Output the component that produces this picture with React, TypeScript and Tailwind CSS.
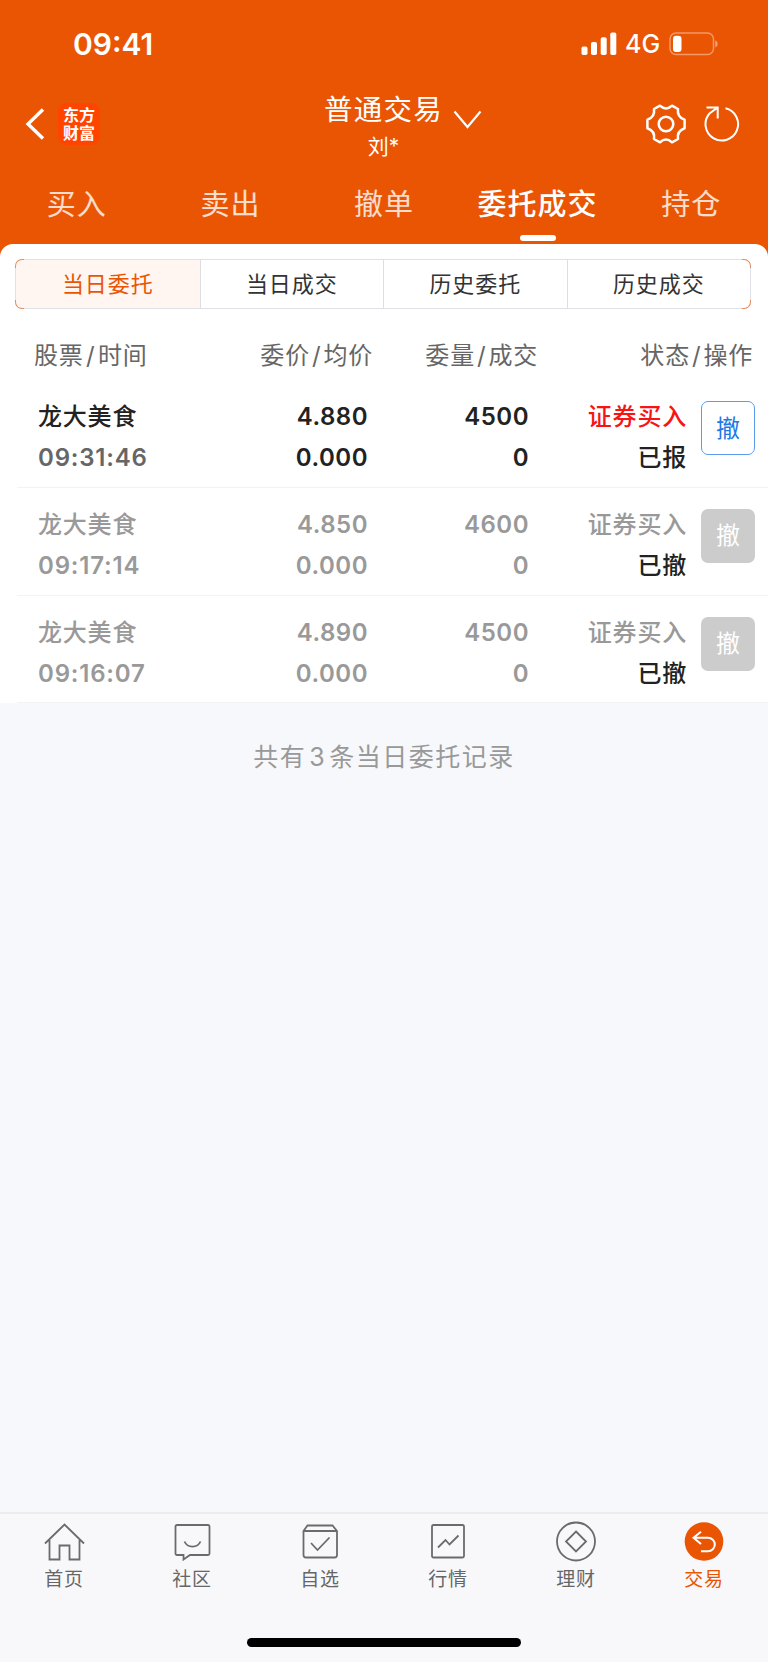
import React, { useState } from 'react';

type Order = {
  id: number;
  name: string;
  time: string;
  price: string;
  avgPrice: string;
  amount: string;
  dealt: string;
  side: string;
  status: string;
  active: boolean;
};

const orders: Order[] = [
  { id: 1, name: "龙大美食", time: "09:31:46", price: "4.880", avgPrice: "0.000", amount: "4500", dealt: "0", side: "证券买入", status: "已报", active: true },
  { id: 2, name: "龙大美食", time: "09:17:14", price: "4.850", avgPrice: "0.000", amount: "4600", dealt: "0", side: "证券买入", status: "已撤", active: false },
  { id: 3, name: "龙大美食", time: "09:16:07", price: "4.890", avgPrice: "0.000", amount: "4500", dealt: "0", side: "证券买入", status: "已撤", active: false },
];

const mainTabs = ["买入", "卖出", "撤单", "委托成交", "持仓"];
const subTabs = ["当日委托", "当日成交", "历史委托", "历史成交"];

function StatusBar() {
  return (
    <div className="h-[88px] flex items-center justify-between pl-[73px] pr-[49px] text-white">
      <p className="text-[30px] font-semibold">09:41</p>
      <div className="flex items-center">
        <svg width="36" height="24" viewBox="0 0 36 24" fill="currentColor">
          <rect x="0.5" y="14.5" width="6" height="8.5" rx="1.8" />
          <rect x="10" y="10" width="6" height="13" rx="1.8" />
          <rect x="19.7" y="5.2" width="6" height="17.8" rx="1.8" />
          <rect x="29.3" y="0.5" width="6" height="22.5" rx="1.8" />
        </svg>
        <p className="ml-[8px] w-[36px] mt-[2px] text-[25px] font-medium">4G</p>
        <svg className="ml-[8px]" width="50" height="24" viewBox="0 0 50 24" fill="none">
          <rect x="1" y="1" width="43.5" height="21.5" rx="6" stroke="white" strokeOpacity="0.4" strokeWidth="1.5" />
          <rect x="4" y="3.7" width="8.5" height="16.4" rx="3" fill="white" />
          <path d="M46.3 8.2c3 1.6 3 5.7 0 7.3z" fill="white" fillOpacity="0.45" />
        </svg>
      </div>
    </div>
  );
}

function NavBar() {
  return (
    <div className="h-[72px] grid grid-cols-3 text-white">
      {/* izq */}
      <div className="flex items-center pl-[25px]">
        <svg width="20" height="32" viewBox="0 0 20 32" fill="none" stroke="currentColor" strokeWidth="3.4">
          <path d="M18 1.5 3 16 18 30.5" />
        </svg>
        <div className="ml-[13px] w-[42px] h-[42px] rounded-[9px] bg-[#ff4400] flex flex-col items-center justify-center text-[16px] leading-[18px] font-bold">
          <span>东方</span>
          <span>财富</span>
        </div>
      </div>
      {/* centro */}
      <div className="flex justify-center">
        <div className="ml-[38px] flex flex-col items-center">
          <p className="mt-[2px] h-[40px] leading-[40px] text-[28.5px] tracking-[1.2px]">普通交易</p>
          <p className="h-[30px] leading-[33px] text-[21px]">刘*</p>
        </div>
        <svg className="ml-[10px] mt-[22px]" width="29" height="20" viewBox="0 0 29 20" fill="none" stroke="currentColor" strokeWidth="2.2">
          <path d="M1.5 1.5 14.5 17 27.5 1.5" />
        </svg>
      </div>
      {/* der */}
      <div className="flex items-center justify-end pr-[28px] gap-[17px]">
        <svg width="42" height="42" viewBox="-21 -21 42 42" fill="none" stroke="currentColor" strokeWidth="2.5" strokeLinejoin="round">
          <circle r="7.3" />
          <path d="M-6-18.300Q0-12.600 6-18.300L12-15Q10.800-7 18.600-4.300L18.600 4.300Q10.800 7 12 15L6 18.300Q0 12.600-6 18.300L-12 15Q-10.800 7-18.600 4.300L-18.600-4.300Q-10.800-7-12-15Z" />
        </svg>
        <svg width="36" height="36" viewBox="-18 -18 36 36" fill="none" stroke="currentColor" strokeWidth="2">
          <path d="M3.500-15.700A16.300 16.300 0 1 1-12.500-10.500L-5-16M-15.500-16.400H-4.300V-5.500" />
        </svg>
      </div>
    </div>
  );
}

function OrderRow({ order }: { order: Order }) {
  const dark = order.active ? "text-[#222]" : "text-[#999]";
  return (
    <li className="ml-[17px] h-[107.8px] border-b-[1.5px] border-[#f3f3f4] flex text-[24px] leading-[41px] font-medium tracking-[0.8px]">
      <div className="pt-[16.4px] pl-[21px] w-[190px]">
        <p className={dark}>{order.name}</p>
        <p className={`font-semibold ${order.active ? "text-[#666]" : "text-[#999]"}`}>{order.time}</p>
      </div>
      <div className={`pt-[16.4px] w-[161px] text-right font-semibold tracking-[0.5px] ${dark}`}>
        <p>{order.price}</p>
        <p>{order.avgPrice}</p>
      </div>
      <div className={`pt-[16.4px] w-[161px] text-right font-semibold tracking-[0.5px] ${dark}`}>
        <p>{order.amount}</p>
        <p>{order.dealt}</p>
      </div>
      <div className="pt-[16.4px] w-[158px] text-right">
        <p className={order.active ? "text-[#f81414]" : "text-[#999]"}>{order.side}</p>
        <p className="text-[#222]">{order.status}</p>
      </div>
      <button
        className={
          order.active
            ? "ml-[14px] mt-[21px] w-[54px] h-[54px] rounded-[7px] border-[1.5px] border-[#5b9cf0] bg-white text-[#1f78e6] font-normal tracking-normal"
            : "ml-[14px] mt-[21px] w-[54px] h-[54px] rounded-[7px] bg-[#ccc] text-white font-normal tracking-normal"
        }
      >
        撤
      </button>
    </li>
  );
}

const navItems = [
  {
    label: "首页",
    icon: <path d="M1 20.5 20.5 1.5 40 20.5M5.5 17V36.5H15.5V22.5H25.5V36.5H35.5V17" />,
  },
  {
    label: "社区",
    icon: (
      <>
        <path d="M5 2H36Q37.5 2 37.5 3.5V30.5Q37.5 32 36 32H18L11.5 36.5V32H5Q3.5 32 3.5 30.5V3.5Q3.5 2 5 2Z" />
        <path d="M12.5 18.5C15.5 25.3 25.5 25.3 28.5 18.5" />
      </>
    ),
  },
  {
    label: "自选",
    icon: (
      <>
        <path d="M3.5 8 7.5 2.5H32.5L37 8V32Q37 34.5 34.5 34.5H6Q3.5 34.5 3.5 32ZM3.5 8H37" />
        <path d="M11 20 17.5 27 29.5 14.5" />
      </>
    ),
  },
  {
    label: "行情",
    icon: (
      <>
        <rect x="4" y="2" width="32" height="32.5" rx="1.5" />
        <path d="M10 24.5 17.5 17 21.5 21.5 30.5 12.5" />
      </>
    ),
  },
  {
    label: "理财",
    icon: (
      <>
        <circle cx="20" cy="18.5" r="19" />
        <path d="M20 8.5 30 18.5 20 28.5 10 18.5Z" />
      </>
    ),
  },
  {
    label: "交易",
    icon: (
      <>
        <circle cx="20" cy="18.5" r="19.3" fill="#ea5504" stroke="none" />
        <path d="M17 8.8 9.5 14.7 17 21M9.5 14.7H24A6.8 6.8 0 0 1 24 28.3H17" stroke="white" strokeWidth="2" />
      </>
    ),
  },
];

function App() {
  const [mainTab, setMainTab] = useState("委托成交");
  const [subTab, setSubTab] = useState("当日委托");

  return (
    <div className="w-[768px] h-[1662px] flex flex-col overflow-hidden bg-[#f7f8fb] font-['Inter','Noto_Sans_CJK_SC',sans-serif]">
      <div className="bg-[#ea5504]">
        <StatusBar />
        <NavBar />
        <div className="h-[84px] grid grid-cols-5">
          {mainTabs.map((tab) => (
            <button
              key={tab}
              onClick={() => setMainTab(tab)}
              className={`flex flex-col items-center pt-[25px] text-[29px] leading-[40px] tracking-[1px] whitespace-nowrap ${
                tab === mainTab ? "font-medium text-white" : "text-white/80"
              }`}
            >
              {tab}
              {tab === mainTab && <span className="mt-[10px] w-[36px] h-[6px] rounded-full bg-white" />}
            </button>
          ))}
        </div>
        <div className="h-[15px] bg-white rounded-t-[13px]" />
      </div>

      <div className="bg-white">
        {/* pestañas */}
        <div className="relative ml-[15px] mr-[17px] h-[50px]">
          <div className="h-full grid grid-cols-4 rounded-[7px] border-[1.5px] border-[#e0e1e7] overflow-hidden">
            {subTabs.map((tab, index) => (
              <button
                key={tab}
                onClick={() => setSubTab(tab)}
                className={`text-[22px] tracking-[0.9px] ${index > 0 ? "border-l-[1.5px] border-[#dcdee4]" : ""} ${
                  tab === subTab ? "bg-[#fff5f1] text-[#ea5504]" : "text-[#333]"
                }`}
              >
                {tab}
              </button>
            ))}
          </div>
          {/* esquinas */}
          <span className="absolute left-0 top-0 w-[9px] h-[9px] border-l border-t border-[#ea5504]/60 rounded-tl-[7px]" />
          <span className="absolute left-0 bottom-0 w-[9px] h-[9px] border-l border-b border-[#ea5504]/60 rounded-bl-[7px]" />
          <span className="absolute right-0 top-0 w-[9px] h-[9px] border-r border-t border-[#ea5504]/60 rounded-tr-[7px]" />
          <span className="absolute right-0 bottom-0 w-[9px] h-[9px] border-r border-b border-[#ea5504]/60 rounded-br-[7px]" />
        </div>
        <div className="h-[71px] pt-[27px] flex text-[24px] leading-[40px] tracking-[0.8px] text-[#666]">
          <p className="w-[211px] pl-[34px]">股票<span className="mx-[2.5px]">/</span>时间</p>
          <p className="w-[162px] text-right">委价<span className="mx-[2px]">/</span>均价</p>
          <p className="w-[165px] text-right">委量<span className="mx-[2px]">/</span>成交</p>
          <p className="w-[215px] text-right">状态<span className="mx-[2px]">/</span>操作</p>
        </div>
        <ul>
          {orders.map((order) => (
            <OrderRow key={order.id} order={order} />
          ))}
        </ul>
      </div>

      <p className="mt-[34px] text-center text-[25px] leading-[40px] tracking-[1.5px] text-[#999]">
        共有<span className="mx-[3px]">{orders.length}</span>条当日委托记录
      </p>

      {/* barra inferior */}
      <div className="mt-auto h-[150px] border-t-2 border-[#ececef] bg-[#f8f8fb]">
        <div className="grid grid-cols-6">
          {navItems.map((item) => (
            <button
              key={item.label}
              className={`flex flex-col items-center pt-[9px] text-[19px] tracking-[0.8px] ${
                item.label === "交易" ? "text-[#ea5504]" : "text-[#666]"
              }`}
            >
              <svg className="overflow-visible" width="40" height="38" viewBox="0 0 40 38" fill="none" stroke="#6b6b6e" strokeWidth="1.8">
                {item.icon}
              </svg>
              <span className="mt-[3px] leading-[32px]">{item.label}</span>
            </button>
          ))}
        </div>
        <div className="mx-auto mt-[42px] w-[274px] h-[9px] rounded-full bg-black" />
      </div>
    </div>
  );
}

export default App;
